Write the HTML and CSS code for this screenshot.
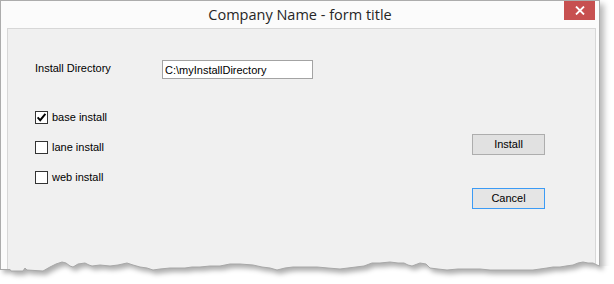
FILE: index.html
```html
<!DOCTYPE html>
<html lang="en">
<head>
  <meta charset="UTF-8" />
  <title>Company Name - form title</title>
  <link rel="stylesheet" href="styles.css">
</head>
<body>
  <div class="sheet">
    <div class="window">
      <div class="titlebar">
        <span></span>
        <span class="title">Company Name - form title</span>
        <button class="close-btn" title="Close">
          <svg width="10" height="9" viewBox="0 0 10 9">
            <path d="M1 0.5 L9 8.5 M9 0.5 L1 8.5" stroke="#fff" stroke-width="1.8" fill="none" />
          </svg>
        </button>
      </div>

      <div class="panel">
        <div class="fields">
          <div class="dir-row">
            <label class="dir-label" for="installDir">Install Directory</label>
            <input class="dir-input" id="installDir" type="text" value="C:\myInstallDirectory" />
          </div>

          <div class="options">
            <label class="check-row">
              <span class="check-box">
                <svg width="11" height="11" viewBox="0 0 11 11">
                  <path d="M1.6 5.4 L4.2 8.2 L9.4 1.8" stroke="#000" stroke-width="1.9" fill="none" />
                </svg>
              </span>
              base install
            </label>
            <label class="check-row">
              <span class="check-box"></span>
              lane install
            </label>
            <label class="check-row">
              <span class="check-box"></span>
              web install
            </label>
          </div>
        </div>

        <div class="actions">
          <button class="win-btn">Install</button>
          <button class="win-btn focused">Cancel</button>
        </div>
      </div>
    </div>

    <!-- torn paper edge at the bottom of the screenshot -->
    <svg class="torn-edge" width="614" height="34" viewBox="0 250 614 34">
      <defs>
        <clipPath id="below">
          <path d="M0 269 L10 269 L11 271 L23 271 L25 268 L27 270 L43 271 L50 267 L56 264 L62 262 L66 263 L70 266 L73 267 L78 264 L85 263 L89 265 L92 266 L100 265 L110 266 L118 265 L127 263 L133 265 L140 267 L147 268 L153 270 L160 269 L170 268 L177 268 L185 268 L192 267 L200 267 L210 266 L220 266 L230 264 L240 264 L253 265 L262 267 L270 268 L277 270 L285 268 L293 267 L305 267 L317 267 L328 268 L340 269 L348 268 L356 267 L364 266 L372 263 L380 263 L390 262 L398 263 L404 263 L408 265 L412 266 L420 263 L426 264 L430 268 L438 269 L447 270 L458 269 L470 269 L480 269 L490 270 L500 270 L510 270 L520 270 L533 270 L540 269 L547 268 L553 267 L560 267 L566 266 L573 265 L578 263 L583 262 L588 263 L593 263 L597 265 L600 266 L614 266 L614 284 L0 284 Z" />
        </clipPath>
        <filter id="soft" x="-10%" y="-50%" width="120%" height="200%">
          <feGaussianBlur stdDeviation="2.8" />
        </filter>
      </defs>
      <rect x="0" y="250" width="614" height="34" fill="#fff" clip-path="url(#below)" />
      <g clip-path="url(#below)">
        <path transform="translate(3 4)" filter="url(#soft)" fill="rgba(0,0,0,0.32)"
          d="M0 240 L0 269 L10 269 L11 271 L23 271 L25 268 L27 270 L43 271 L50 267 L56 264 L62 262 L66 263 L70 266 L73 267 L78 264 L85 263 L89 265 L92 266 L100 265 L110 266 L118 265 L127 263 L133 265 L140 267 L147 268 L153 270 L160 269 L170 268 L177 268 L185 268 L192 267 L200 267 L210 266 L220 266 L230 264 L240 264 L253 265 L262 267 L270 268 L277 270 L285 268 L293 267 L305 267 L317 267 L328 268 L340 269 L348 268 L356 267 L364 266 L372 263 L380 263 L390 262 L398 263 L404 263 L408 265 L412 266 L420 263 L426 264 L430 268 L438 269 L447 270 L458 269 L470 269 L480 269 L490 270 L500 270 L510 270 L520 270 L533 270 L540 269 L547 268 L553 267 L560 267 L566 266 L573 265 L578 263 L583 262 L588 263 L593 263 L597 265 L600 266 L600 240 Z" />
      </g>
      <path fill="none" stroke="#a8a8a8" stroke-width="1"
        d="M0 269.5 L10 269.5 L11 271 L23 271 L25 268 L27 270 L43 271 L50 267 L56 264 L62 262 L66 263 L70 266 L73 267 L78 264 L85 263 L89 265 L92 266 L100 265 L110 266 L118 265 L127 263 L133 265 L140 267 L147 268 L153 270 L160 269 L170 268 L177 268 L185 268 L192 267 L200 267 L210 266 L220 266 L230 264 L240 264 L253 265 L262 267 L270 268 L277 270 L285 268 L293 267 L305 267 L317 267 L328 268 L340 269 L348 268 L356 267 L364 266 L372 263 L380 263 L390 262 L398 263 L404 263 L408 265 L412 266 L420 263 L426 264 L430 268 L438 269 L447 270 L458 269 L470 269 L480 269 L490 270 L500 270 L510 270 L520 270 L533 270 L540 269 L547 268 L553 267 L560 267 L566 266 L573 265 L578 263 L583 262 L588 263 L593 263 L597 265 L599.5 266" />
    </svg>
  </div>
</body>
</html>
```

FILE: styles.css
```css
body {
  margin: 0;
  background-color: #fff;
  font-family: 'Liberation Sans', Arial, sans-serif;
  overflow: hidden;
}

.sheet {
  position: relative;
  width: 614px;
  height: 284px;
}

.window {
  width: 600px;
  height: 282px;
  box-sizing: border-box;
  border: 1px solid #acacac;
  background-color: #fbfbfb;
  box-shadow: 4px 4px 6px rgba(0, 0, 0, 0.28);
  display: flex;
  flex-direction: column;
}

.titlebar {
  height: 27px;
  display: grid;
  grid-template-columns: 1fr auto 1fr;
  align-items: center;
}

.title {
  font-family: 'Open Sans', 'Noto Sans', sans-serif;
  font-size: 14.5px;
  color: #262626;
  padding-bottom: 1px;
}

.close-btn {
  justify-self: end;
  align-self: start;
  width: 31px;
  height: 19px;
  margin-right: 4px;
  padding: 0;
  border: none;
  background-color: #c75050;
  display: flex;
  align-items: center;
  justify-content: center;
}

.panel {
  flex: 1;
  margin: 0 3px 0 6px;
  border: 1px solid #d7d7d7;
  border-bottom: none;
  background-color: #f0f0f0;
  padding: 31px 50px 0 27px;
  display: flex;
  font-size: 11px;
  color: #000;
}

.dir-row {
  display: flex;
  align-items: center;
  height: 19px;
}

.dir-label {
  width: 127px;
  padding-bottom: 4px;
}

.dir-input {
  width: 151px;
  height: 19px;
  box-sizing: border-box;
  margin: 0;
  border: 1px solid #a3a3a3;
  padding: 0 2px;
  font-family: 'Liberation Sans', Arial, sans-serif;
  font-size: 11px;
  color: #000;
  background-color: #fff;
  outline: none;
}

.options {
  margin-top: 23px;
}

.check-row {
  display: flex;
  align-items: center;
  height: 30px;
}

.check-box {
  width: 13px;
  height: 13px;
  box-sizing: border-box;
  border: 1px solid #333;
  background-color: #fff;
  margin-right: 4px;
  display: flex;
}

.actions {
  margin-left: auto;
  margin-top: 74px;
  display: flex;
  flex-direction: column;
  gap: 33px;
}

.win-btn {
  width: 73px;
  height: 21px;
  margin: 0;
  padding: 0 0 2px;
  border: 1px solid #adadad;
  background-color: #e1e1e1;
  font-family: 'Liberation Sans', Arial, sans-serif;
  font-size: 11px;
  color: #000;
}

.win-btn.focused {
  border-color: #3c9bf5;
  background-color: #e5e5e5;
}

.torn-edge {
  position: absolute;
  left: 0;
  top: 250px;
}
```
